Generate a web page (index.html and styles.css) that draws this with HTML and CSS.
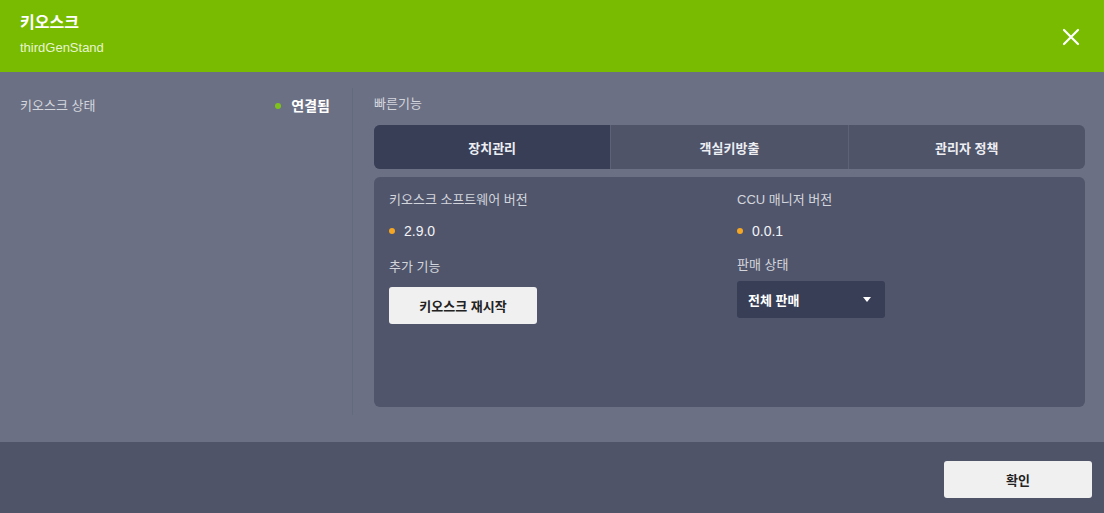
FILE: index.html
```html
<!DOCTYPE html>
<html lang="ko">
<head>
    <meta charset="UTF-8">
    <meta name="viewport" content="width=device-width, initial-scale=1.0">
    <title>키오스크</title>
    <link rel="stylesheet" href="styles.css">
</head>
<body>
    <div class="dialog">
        <header class="dialog-header">
            <div class="title-box">
                <h1>키오스크</h1>
                <div class="subtitle">thirdGenStand</div>
            </div>
            <button class="close-btn" aria-label="닫기">
                <svg width="18" height="18" viewBox="0 0 18 18">
                    <path d="M2 2 L16 16 M16 2 L2 16" stroke="#fff" stroke-width="2.2" stroke-linecap="round"/>
                </svg>
            </button>
        </header>

        <main class="dialog-body">
            <section class="status-col">
                <span class="label">키오스크 상태</span>
                <span class="status"><i class="dot green"></i>연결됨</span>
            </section>

            <section class="quick-col">
                <div class="label">빠른기능</div>
                <div class="tabs">
                    <div class="tab active">장치관리</div>
                    <div class="tab">객실키방출</div>
                    <div class="tab">관리자 정책</div>
                </div>
                <div class="panel">
                    <div class="panel-col first">
                        <div class="field-label">키오스크 소프트웨어 버전</div>
                        <div class="value"><i class="dot orange"></i>2.9.0</div>
                        <div class="field-label">추가 기능</div>
                        <button class="light-btn">키오스크 재시작</button>
                    </div>
                    <div class="panel-col">
                        <div class="field-label">CCU 매니저 버전</div>
                        <div class="value"><i class="dot orange"></i>0.0.1</div>
                        <div class="field-label sale">판매 상태</div>
                        <div class="select">
                            <span>전체 판매</span>
                            <span class="caret"></span>
                        </div>
                    </div>
                </div>
            </section>
        </main>

        <footer class="dialog-footer">
            <button class="light-btn">확인</button>
        </footer>
    </div>
</body>
</html>
```

FILE: styles.css
```css
:root {
    --green: #78bb00;
    --body-bg: #6b7084;
    --footer-bg: #4f5469;
    --panel-bg: #50556b;
    --active-bg: #393e57;
    --label: #d3d5dd;
}
* {
    box-sizing: border-box;
}
body {
    margin: 0;
    width: 1104px;
    height: 513px;
    font-family: 'Liberation Sans', 'Noto Sans CJK KR', sans-serif;
    font-size: 13px;
    color: #fff;
    overflow: hidden;
}
.dialog {
    display: flex;
    flex-direction: column;
    height: 100%;
}
.dialog-header {
    height: 72px;
    background-color: var(--green);
    display: flex;
    align-items: center;
    justify-content: space-between;
    padding: 0 24px 4px 20px;
}
.dialog-header h1 {
    margin: 0;
    font-size: 16px;
    font-weight: bold;
    line-height: 20px;
}
.subtitle {
    margin-top: 7px;
    font-size: 13px;
    color: #e8f5d0;
}
.close-btn {
    background: none;
    border: none;
    padding: 0;
    margin-top: 6px;
    cursor: pointer;
    display: flex;
}
.dialog-body {
    flex: 1;
    background-color: var(--body-bg);
    display: flex;
    padding: 16px 19px 0 20px;
}
.label {
    color: var(--label);
    line-height: 18px;
}
.status-col {
    width: 333px;
    height: 327px;
    border-right: 1px solid #646a7e;
    display: flex;
    justify-content: space-between;
    align-items: flex-start;
    padding: 9px 22px 0 0;
}
.status {
    font-weight: bold;
    font-size: 14px;
    line-height: 20px;
    margin-top: -1px;
}
.dot {
    display: inline-block;
    width: 6px;
    height: 6px;
    border-radius: 50%;
    margin-right: 9px;
    vertical-align: 2px;
}
.status .dot {
    margin-right: 10px;
}
.dot.green {
    background-color: #7fc31a;
}
.dot.orange {
    background-color: #f5a623;
}
.quick-col {
    flex: 1;
    padding: 7px 0 0 21px;
}
.tabs {
    margin-top: 12px;
    display: flex;
    height: 44px;
    border-radius: 6px;
    overflow: hidden;
    background-color: var(--footer-bg);
}
.tab {
    flex: 1;
    display: flex;
    align-items: center;
    justify-content: center;
    font-weight: bold;
    color: #eceef3;
    border-left: 1px solid #5d6277;
}
.tab:first-child {
    border-left: none;
}
.tab.active {
    background-color: var(--active-bg);
}
.panel {
    margin-top: 8px;
    height: 230px;
    background-color: var(--panel-bg);
    border-radius: 6px;
    display: flex;
    padding: 13px 15px;
}
.panel-col {
    flex: 1;
}
.panel-col.first {
    flex: none;
    width: 348px;
}
.field-label {
    color: var(--label);
    line-height: 20px;
}
.value {
    margin-top: 11px;
    line-height: 20px;
    font-size: 14px;
    color: #f2f3f6;
}
.value + .field-label {
    margin-top: 16px;
}
.value + .field-label.sale {
    margin-top: 14px;
}
.light-btn {
    width: 148px;
    height: 37px;
    border: none;
    border-radius: 3px;
    background-color: #f0f0f0;
    color: #222;
    font-family: inherit;
    font-size: 13px;
    font-weight: bold;
    cursor: pointer;
}
.panel .light-btn {
    margin-top: 10px;
}
.select {
    margin-top: 6px;
    width: 148px;
    height: 37px;
    background-color: var(--active-bg);
    border-radius: 3px;
    display: flex;
    align-items: center;
    justify-content: space-between;
    padding: 0 14px 0 11px;
    font-weight: bold;
}
.caret {
    width: 0;
    height: 0;
    border-left: 4px solid transparent;
    border-right: 4px solid transparent;
    border-top: 5px solid #fff;
}
.dialog-footer {
    height: 71px;
    background-color: var(--footer-bg);
    display: flex;
    justify-content: flex-end;
    align-items: center;
    padding: 4px 12px 0 0;
}
```
